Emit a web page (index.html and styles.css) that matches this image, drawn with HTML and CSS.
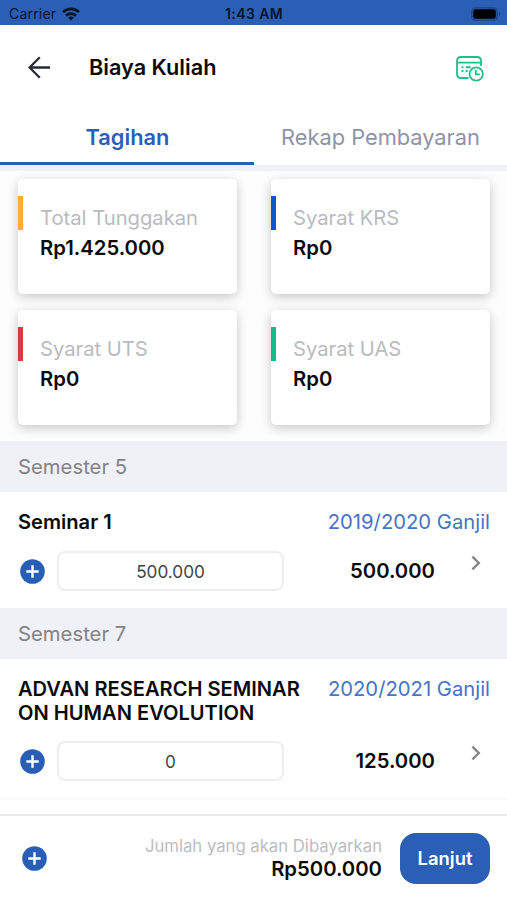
FILE: index.html
```html
<!DOCTYPE html>
<html lang="id">
<head>
<meta charset="utf-8">
<title>Biaya Kuliah</title>
<link rel="stylesheet" href="styles.css">
</head>
<body>
<svg class="defs" width="0" height="0" aria-hidden="true">
  <symbol id="plus" viewBox="0 0 25 25"><circle cx="12.5" cy="12.5" r="12.3" fill="#295eb7"/><path d="M12.5 6.3v12.4M6.3 12.5h12.4" stroke="#fff" stroke-width="2.4"/></symbol>
  <symbol id="chevron" viewBox="0 0 10 16"><path d="M1.4 1.7L7.8 8l-6.4 6.3" fill="none" stroke="#858585" stroke-width="2.4"/></symbol>
</svg>
<div class="status">
  <span class="carrier">Carrier</span>
  <svg class="wifi" viewBox="0 0 18 14"><g fill="none" stroke="#07142a" stroke-width="2.7"><path d="M1 5.1a11.4 11.4 0 0 1 16 0"/><path d="M4 8.7a7.2 7.2 0 0 1 10 0"/></g><path d="M9 13.6L6 10.8a4.4 4.4 0 0 1 6 0z" fill="#07142a"/></svg>
  <span class="clock">1:43 AM</span>
  <svg class="battery" viewBox="0 0 30 14"><rect x=".8" y=".8" width="25.4" height="12.4" rx="3.5" fill="none" stroke="#1c4488" stroke-width="1.3"/><rect x="2.2" y="2.3" width="22.6" height="9.4" rx="2.2" fill="#000"/><path d="M27.8 5v4q1.6-.6 1.6-2t-1.6-2z" fill="#1c4488"/></svg>
</div>
<header class="header">
  <svg class="back" viewBox="0 0 24 24"><path d="M23 12H2M12.3 1.3L1.7 12l10.6 10.7" fill="none" stroke="#272b35" stroke-width="2.4"/></svg>
  <h1>Biaya Kuliah</h1>
  <svg class="history" viewBox="0 0 28 26"><g fill="none" stroke="#22bd88" stroke-width="1.8"><path d="M12.5 22H5q-4 0-4-4V5q0-4 4-4h16q4 0 4 4v5M1.4 6.6h23.2"/><circle cx="20.2" cy="18" r="6.7"/><path d="M19.8 13.8v4.5h4"/><path d="M5.5 11.2h2M9.7 11.2h5M5.5 15.1h2M9.7 15.1h2" stroke-width="2"/></g></svg>
</header>
<nav class="tabs"><a class="tab active"><span>Tagihan</span></a><a class="tab"><span>Rekap Pembayaran</span></a></nav>
<section class="cards">
  <div class="card orange"><p>Total Tunggakan</p><b>Rp1.425.000</b></div>
  <div class="card blue"><p>Syarat KRS</p><b>Rp0</b></div>
  <div class="card red"><p>Syarat UTS</p><b>Rp0</b></div>
  <div class="card green"><p>Syarat UAS</p><b>Rp0</b></div>
</section>
<h2>Semester 5</h2>
<section class="item">
  <div class="top"><h3>Seminar 1</h3><span class="term">2019/2020 Ganjil</span></div>
  <div class="row"><svg class="plus"><use href="#plus"/></svg><div class="field">500.000</div><b class="amount">500.000</b><svg class="chevron"><use href="#chevron"/></svg></div>
</section>
<h2>Semester 7</h2>
<section class="item last">
  <div class="top"><h3>ADVAN RESEARCH SEMINAR<br>ON HUMAN EVOLUTION</h3><span class="term">2020/2021 Ganjil</span></div>
  <div class="row"><svg class="plus"><use href="#plus"/></svg><div class="field">0</div><b class="amount">125.000</b><svg class="chevron"><use href="#chevron"/></svg></div>
</section>
<footer class="footer">
  <svg class="plus"><use href="#plus"/></svg>
  <div class="total"><span>Jumlah yang akan Dibayarkan</span><b>Rp500.000</b></div>
  <button>Lanjut</button>
</footer>
</body>
</html>
```

FILE: styles.css
```css
* { box-sizing: border-box; }
body { margin: 0; width: 507px; height: 900px; overflow: hidden; display: flex; flex-direction: column; background: #fff; color: #0b0b0d; font-family: Inter, sans-serif; }
h1, h2, h3, p { margin: 0; }
b, h1, h3 { font-weight: 600; }
span, p, b, h1, h2, h3 { white-space: nowrap; }
svg { display: block; flex: none; }
.defs { height: 0; }
.status { display: grid; grid-template-columns: 53px 163px 1fr 30px; height: 25px; flex: none; align-items: center; padding: 1px 6px 0 9px; background: #2b5fb6; color: #07142a; font-size: 14px; line-height: 24px; }
.carrier { letter-spacing: .2px; padding-top: 1px; }
.wifi { width: 18px; height: 14px; }
.clock { font-weight: 600; letter-spacing: .4px; padding-top: 1px; }
.battery { width: 30px; height: 14px; }
.header { display: flex; align-items: center; height: 85px; flex: none; padding: 0 23px 0 28px; }
.back { width: 23px; height: 23px; }
h1 { margin: -1px 0 0 38px; font-size: 21.7px; line-height: 28px; flex: 1; }
.history { width: 28px; height: 26px; margin-top: 2px; }
.tabs { display: flex; height: 61px; flex: none; border-bottom: 6px solid #f0f1f8; }
.tab { flex: 1; text-align: center; font-size: 21.8px; line-height: 55px; color: #8e94a8; }
.tab.active { padding-left: 1px; color: #2b5fb6; font-weight: 600; height: 55px; border-bottom: 3px solid #2b5fb6; }
.cards { display: grid; grid-template-columns: 219px 219px; grid-template-rows: 115px 115px; gap: 16px 34px; height: 270px; flex: none; padding: 8px 17px 0 18px; background: #fdfdfd; }
.card { position: relative; border-radius: 5px; background: #fff; padding: 25px 0 0 22px; box-shadow: 0 3px 11px rgba(0,0,0,.22); }
.card::before { content: ""; position: absolute; left: 0; top: 17px; width: 5px; height: 34px; background: var(--accent); }
.orange { --accent: #f9ae3c; }
.blue { --accent: #0b57cc; }
.red { --accent: #d63b40; }
.green { --accent: #15bd86; }
.card p { color: #b9bbc0; font-size: 20.2px; line-height: 28px; }
.card b { display: block; font-size: 20.3px; line-height: 32px; }
h2 { height: 51px; flex: none; padding-left: 18px; background: #eff1f7; color: #828388; font-size: 20.3px; font-weight: 400; line-height: 51px; }
.item { height: 116px; flex: none; padding: 17px 17px 0 18px; }
.item.last { height: 141px; border-bottom: 2px solid #f7f7f7; }
.top { display: flex; justify-content: space-between; }
h3 { font-size: 20.1px; line-height: 25px; padding-top: 1px; margin-bottom: -1px; }
.last h3 { line-height: 24px; margin-bottom: 0; }
.term { color: #4674c4; font-size: 20.25px; line-height: 25px; }
.row { display: flex; align-items: center; margin-top: 17px; height: 40px; }
.last .row { margin-top: 16px; }
.plus { width: 25px; height: 25px; }
.row .plus { margin-left: 2px; }
.field { width: 227px; height: 40px; margin-left: 12px; border: 2px solid #eeeeef; border-radius: 8px; font-size: 17.2px; line-height: 38px; text-align: center; color: #444; }
.amount { width: 151px; font-size: 20.3px; line-height: 24px; margin-top: -1px; text-align: right; }
.last .amount { margin-top: 0; }
.chevron { width: 10px; height: 16px; margin: -17px 0 0 36px; }
.footer { display: flex; align-items: center; margin-top: 14px; height: 87px; flex: none; border-top: 2px solid #e8e8e9; padding: 0 17px 0 22px; }
.total { flex: 1; display: flex; flex-direction: column; text-align: right; margin: -1px 18px 0 0; }
.total span { color: #bbbdc2; font-size: 16.7px; line-height: 22px; }
.total b { font-size: 20.3px; line-height: 24px; }
button { width: 90px; height: 51px; border: 0; padding: 0 0 2px; border-radius: 16px; background: #2b5fb6; color: #fff; font: 600 18.4px Inter, sans-serif; }
```
